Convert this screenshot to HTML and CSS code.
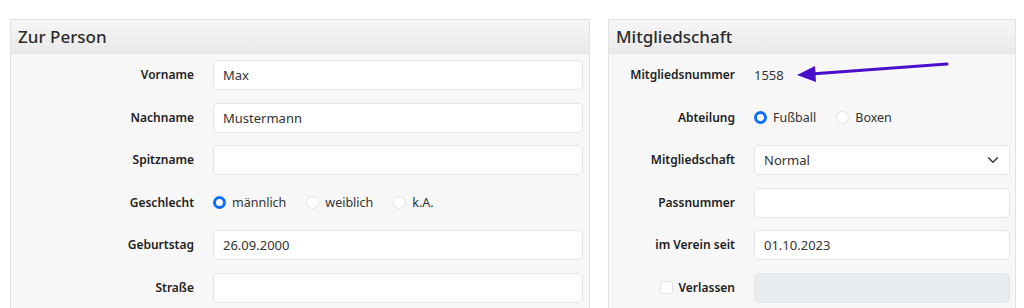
FILE: index.html
```html
<!DOCTYPE html>
<html lang="de">
<head>
  <meta charset="UTF-8">
  <title>Mitglied bearbeiten</title>
  <link rel="stylesheet" href="styles.css">
</head>
<body>
  <div class="page">
    <section class="card card-person">
      <h3 class="card-head">Zur Person</h3>
      <div class="card-body">
        <label class="field-label" for="vorname">Vorname</label>
        <input class="field" id="vorname" type="text" value="Max">

        <label class="field-label" for="nachname">Nachname</label>
        <input class="field" id="nachname" type="text" value="Mustermann">

        <label class="field-label" for="spitzname">Spitzname</label>
        <input class="field" id="spitzname" type="text">

        <span class="field-label">Geschlecht</span>
        <div class="radio-group">
          <label class="radio"><input type="radio" name="geschlecht" checked> männlich</label>
          <label class="radio"><input type="radio" name="geschlecht"> weiblich</label>
          <label class="radio"><input type="radio" name="geschlecht"> k.A.</label>
        </div>

        <label class="field-label" for="geburtstag">Geburtstag</label>
        <input class="field" id="geburtstag" type="text" value="26.09.2000">

        <label class="field-label" for="strasse">Straße</label>
        <input class="field" id="strasse" type="text">
      </div>
    </section>

    <section class="card card-member">
      <h3 class="card-head">Mitgliedschaft</h3>
      <div class="card-body">
        <span class="field-label">Mitgliedsnummer</span>
        <span class="static-value">1558</span>

        <span class="field-label">Abteilung</span>
        <div class="radio-group">
          <label class="radio"><input type="radio" name="abteilung" checked> Fußball</label>
          <label class="radio"><input type="radio" name="abteilung"> Boxen</label>
        </div>

        <label class="field-label" for="art">Mitgliedschaft</label>
        <div class="select-wrap">
          <select class="field" id="art">
            <option>Normal</option>
            <option>Ermäßigt</option>
            <option>Passiv</option>
          </select>
          <svg class="chevron" width="12" height="12" viewBox="0 0 16 16">
            <path d="M2 5l6 6 6-6" fill="none" stroke="#343a40" stroke-width="2" stroke-linecap="round" stroke-linejoin="round"/>
          </svg>
        </div>

        <label class="field-label" for="pass">Passnummer</label>
        <input class="field" id="pass" type="text">

        <label class="field-label" for="seit">im Verein seit</label>
        <input class="field" id="seit" type="text" value="01.10.2023">

        <label class="field-label check-label"><input type="checkbox" class="check"> Verlassen</label>
        <input class="field" type="text" disabled>
      </div>
    </section>
  </div>

  <!-- Hinweispfeil auf die Mitgliedsnummer -->
  <svg class="arrow" width="160" height="24" viewBox="0 0 160 24">
    <line x1="150" y1="2" x2="14" y2="12" stroke="#4a0fc8" stroke-width="3" stroke-linecap="round"/>
    <polygon points="0,13 18,4 19,20" fill="#4a0fc8"/>
  </svg>
</body>
</html>
```

FILE: styles.css
```css
/* Basis */
html, body {
  margin: 0;
  height: 100%;
  overflow: hidden;
  background: #fff;
  font-family: "Noto Sans", "Open Sans", Arial, sans-serif;
  font-size: 13px;
  color: #212529;
}

.page {
  display: flex;
  gap: 18px;
  padding: 19px 8px 0 10px;
  align-items: flex-start;
}

/* Karten */
.card {
  border: 1px solid #e2e2e2;
  background: #f7f7f7;
}

.card-person {
  width: 578px;
}

.card-member {
  width: 406px;
}

.card-head {
  margin: 0;
  height: 33px;
  line-height: 33px;
  padding: 0 7px;
  font-size: 17px;
  font-weight: 500;
  color: #2b2b2b;
  background: linear-gradient(#f6f6f6, #e9e9e9);
  border-bottom: 1px solid #e4e4e4;
}

.card-body {
  display: grid;
  column-gap: 19px;
  row-gap: 12.6px;
  align-items: center;
  padding: 6px 6px 20px 0;
}

.card-person .card-body {
  grid-template-columns: 183px 1fr;
}

.card-member .card-body {
  grid-template-columns: 126px 1fr;
  padding-right: 5px;
}

/* Felder */
.field-label {
  text-align: right;
  font-size: 12px;
  font-weight: 600;
  color: #222;
  line-height: 30px;
}

.static-value {
  line-height: 30px;
  color: #333;
}

.field {
  height: 30px;
  box-sizing: border-box;
  width: 100%;
  padding: 0 9px;
  border: 1px solid #e5e5e5;
  border-radius: 5px;
  background: #fff;
  font: inherit;
  color: #333;
}

.field:disabled {
  background: #e9ecef;
  border-color: #e5e5e5;
}

.select-wrap {
  position: relative;
}

.select-wrap select {
  appearance: none;
  -webkit-appearance: none;
}

.chevron {
  position: absolute;
  right: 11px;
  top: 9px;
  pointer-events: none;
}

/* Radios + Checkbox */
.radio-group {
  display: flex;
  gap: 20px;
  height: 30px;
  align-items: center;
}

.radio {
  display: flex;
  align-items: center;
  gap: 6px;
  font-size: 12.5px;
  color: #333;
}

.radio input {
  appearance: none;
  -webkit-appearance: none;
  margin: 0;
  width: 13px;
  height: 13px;
  border-radius: 50%;
  border: 1px solid #e3e3e3;
  background: #fff;
}

.radio input:checked {
  border: 3.5px solid #0d6efd;
}

.check-label {
  display: flex;
  justify-content: flex-end;
  align-items: center;
  gap: 6px;
}

.check {
  appearance: none;
  -webkit-appearance: none;
  margin: 0;
  width: 13px;
  height: 13px;
  border: 1px solid #e3e3e3;
  border-radius: 3px;
  background: #fff;
}

/* Pfeil */
.arrow {
  position: absolute;
  left: 797px;
  top: 62px;
}
```
